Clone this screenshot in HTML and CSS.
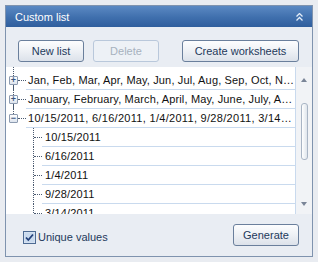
FILE: index.html
```html
<!DOCTYPE html>
<html lang="en">
  <head>
    <meta charset="UTF-8" />
    <title>Custom list</title>
    <link rel="stylesheet" href="styles.css">
  </head>
  <body>
    <div class="panel">
      <div class="panel-header">
        <span class="panel-title">Custom list</span>
        <svg class="collapse" width="7" height="8" viewBox="0 0 7 8">
          <path d="M0.5 3.5 L3.5 0.5 L6.5 3.5 M0.5 7.5 L3.5 4.5 L6.5 7.5" fill="none" stroke="#e4edf8" stroke-width="1.3"/>
        </svg>
      </div>

      <div class="panel-body">
        <div class="toolbar">
          <button class="btn btn-small">New list</button>
          <button class="btn btn-small" disabled>Delete</button>
          <button class="btn btn-wide">Create worksheets</button>
        </div>

        <div class="list">
          <div class="tree">
            <div class="row top">
              <div class="gutter"><span class="toggle">+</span></div>
              <div class="label">Jan, Feb, Mar, Apr, May, Jun, Jul, Aug, Sep, Oct, Nov, Dec</div>
            </div>
            <div class="row top">
              <div class="gutter"><span class="toggle">+</span></div>
              <div class="label">January, February, March, April, May, June, July, August, September</div>
            </div>
            <div class="row top open">
              <div class="gutter"><span class="toggle">−</span></div>
              <div class="label dates">10/15/2011, 6/16/2011, 1/4/2011, 9/28/2011, 3/14/2011, 12/2/2011</div>
            </div>
            <div class="row child">
              <div class="gutter"></div>
              <div class="label">10/15/2011</div>
            </div>
            <div class="row child">
              <div class="gutter"></div>
              <div class="label">6/16/2011</div>
            </div>
            <div class="row child">
              <div class="gutter"></div>
              <div class="label">1/4/2011</div>
            </div>
            <div class="row child">
              <div class="gutter"></div>
              <div class="label">9/28/2011</div>
            </div>
            <div class="row child">
              <div class="gutter"></div>
              <div class="label">3/14/2011</div>
            </div>
          </div>

          <div class="scrollbar">
            <span class="arrow arrow-up"></span>
            <span class="thumb"></span>
            <span class="arrow arrow-down"></span>
          </div>
        </div>

        <div class="footer">
          <label class="check">
            <svg width="13" height="13" viewBox="0 0 13 13">
              <rect x="0.5" y="0.5" width="12" height="12" fill="#dfe9f5" stroke="#4d6b93"/>
              <rect x="1.5" y="1.5" width="10" height="10" fill="#c9daee"/>
              <path d="M3 6.5 L5.3 9 L10 3.5" fill="none" stroke="#22407a" stroke-width="1.8"/>
            </svg>
            Unique values
          </label>
          <button class="btn btn-small">Generate</button>
        </div>
      </div>
    </div>
  </body>
</html>
```

FILE: styles.css
```css
body {
  margin: 0;
  padding: 5px 0 0 5px;
  background: #e9ecf1;
  font-family: "Liberation Sans", Arial, sans-serif;
  font-size: 11px;
}

.panel {
  width: 308px;
  height: 252px;
  box-sizing: border-box;
  border: 1px solid #7f93ae;
  background: #e9edf3;
  display: flex;
  flex-direction: column;
}

.panel-header {
  height: 21px;
  display: flex;
  align-items: center;
  justify-content: space-between;
  padding: 0 9px 0 9px;
  background: linear-gradient(#5b89c3, #3f6fad 55%, #2f5e9d);
  color: #fff;
  font-size: 11px;
}

.collapse {
  margin-top: 1px;
}

.panel-body {
  flex: 1;
  display: flex;
  flex-direction: column;
}

.toolbar {
  display: flex;
  padding: 13px 13px 0 12px;
  gap: 9px;
}

.btn {
  height: 22px;
  padding: 0;
  font-family: inherit;
  font-size: 11px;
  color: #1e395b;
  background: linear-gradient(#fdfdfe, #eef1f5 50%, #dce2ea);
  border: 1px solid #6a7f9c;
  border-radius: 3px;
}

.btn:disabled {
  color: #a7b1be;
  background: #edf1f6;
  border-color: #b9c8db;
}

.btn-small {
  width: 66px;
}

.btn-wide {
  width: 117px;
  margin-left: auto;
}

.list {
  margin-top: 5px;
  height: 147px;
  display: flex;
  background: #fff;
  overflow: hidden;
}

.tree {
  flex: 1;
  padding-top: 4px;
  border-right: 1px solid #c9daee;
  min-width: 0;
}

.row {
  display: flex;
  height: 19px;
}

.gutter {
  position: relative;
  flex: none;
}

.top .gutter {
  width: 20px;
}

.child .gutter {
  width: 36px;
}

.label {
  flex: 1;
  min-width: 0;
  line-height: 18px;
  border-bottom: 1px solid #c9daee;
  white-space: nowrap;
  overflow: hidden;
  text-overflow: ellipsis;
  letter-spacing: 0.15px;
  color: #111;
}

/* digits run a little wider in the original font */
.label.dates {
  letter-spacing: 0.3px;
}

.top .label {
  padding-left: 2px;
}

.child .label {
  padding-left: 3px;
}

/* tree connector lines */
.top .gutter::before {
  content: "";
  position: absolute;
  left: 7px;
  top: -5px;
  height: 24px;
  border-left: 1px dotted #4a5a70;
}

.open .gutter::before {
  height: 14px;
}

.top .gutter::after {
  content: "";
  position: absolute;
  left: 12px;
  top: 9px;
  width: 8px;
  border-top: 1px dotted #4a5a70;
}

.child .gutter::before {
  content: "";
  position: absolute;
  left: 27px;
  top: 0;
  height: 19px;
  border-left: 1px dotted #4a5a70;
}

.child .gutter::after {
  content: "";
  position: absolute;
  left: 28px;
  top: 9px;
  width: 8px;
  border-top: 1px dotted #4a5a70;
}

.toggle {
  position: absolute;
  z-index: 1;
  left: 3px;
  top: 5px;
  width: 7px;
  height: 7px;
  border: 1px solid #8d9bb0;
  border-radius: 1px;
  background: linear-gradient(#ffffff, #dde4ee);
  color: #3a5580;
  font-size: 9px;
  line-height: 7px;
  text-align: center;
  font-weight: bold;
}

.scrollbar {
  width: 16px;
  flex: none;
  background: #f1f3f6;
  display: flex;
  flex-direction: column;
  align-items: center;
  padding-top: 11px;
}

.arrow {
  width: 0;
  height: 0;
  border-left: 3.5px solid transparent;
  border-right: 3.5px solid transparent;
}

.arrow-up {
  border-bottom: 4px solid #7a8597;
}

.arrow-down {
  margin-top: 42px;
  border-top: 4px solid #7a8597;
}

.thumb {
  margin-top: 21px;
  width: 5px;
  height: 55px;
  border: 1px solid #a9b5c5;
  border-radius: 3px;
  background: linear-gradient(90deg, #ffffff, #dfe5ec);
}

.footer {
  flex: 1;
  display: flex;
  align-items: center;
  justify-content: space-between;
  padding: 0 13px 0 17px;
}

.check {
  display: flex;
  align-items: center;
  gap: 2px;
  margin-top: 4px;
  color: #1e395b;
  font-size: 11px;
}
```
